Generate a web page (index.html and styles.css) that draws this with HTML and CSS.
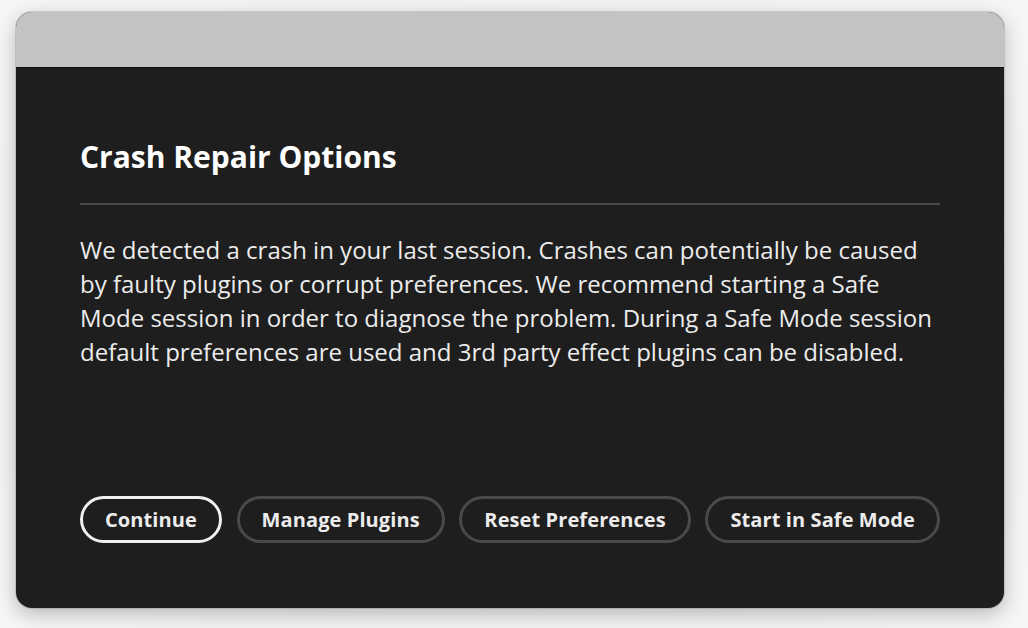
FILE: index.html
```html
<!DOCTYPE html>
<html>
<head>
<meta charset="utf-8">
<link rel="stylesheet" href="styles.css">
</head>
<body>
<div class="window">
  <div class="titlebar"></div>
  <div class="content">
    <h1 class="title">Crash Repair Options</h1>
    <div class="rule"></div>
    <p class="message">We detected a crash in your last session. Crashes can potentially be caused by faulty plugins or corrupt preferences. We recommend starting a Safe Mode session in order to diagnose the problem. During a Safe Mode session default preferences are used and 3rd party effect plugins can be disabled.</p>
    <div class="buttons">
      <button class="btn primary">Continue</button>
      <button class="btn">Manage Plugins</button>
      <button class="btn">Reset Preferences</button>
      <button class="btn">Start in Safe Mode</button>
    </div>
  </div>
</div>
</body>
</html>
```
FILE: styles.css
```css
html, body {
  margin: 0;
  padding: 0;
}
body {
  width: 1028px;
  height: 628px;
  background: radial-gradient(ellipse at center, #d8d8d8 0%, #f3f3f3 70%, #f6f6f6 100%);
  font-family: "Open Sans", "Lato", sans-serif;
  overflow: hidden;
}
.window {
  margin: 12px 0 0 16px;
  width: 988px;
  height: 596px;
  border-radius: 16px;
  overflow: hidden;
  background: #1e1e1e;
  box-shadow: 0 0 0 1px rgba(0,0,0,0.12), 0 6px 20px rgba(0,0,0,0.25);
  display: flex;
  flex-direction: column;
}
.titlebar {
  height: 55px;
  background: #c4c2c2;
  border-bottom: 1px solid #0e0e0e;
  flex: none;
}
.content {
  flex: 1;
  padding: 0 64px;
  display: flex;
  flex-direction: column;
}
.title {
  margin: 70px 0 0;
  color: #ffffff;
  font-size: 30px;
  font-weight: 700;
  line-height: 38px;
  letter-spacing: 0;
}
.rule {
  margin-top: 27px;
  height: 2px;
  background: #4a4a4a;
}
.message {
  margin: 28px 0 0;
  color: #ececec;
  font-size: 24px;
  line-height: 34px;
  letter-spacing: 0;
}
.buttons {
  margin-top: auto;
  margin-bottom: 65px;
  display: flex;
  justify-content: space-between;
}
.btn {
  height: 47px;
  padding: 0 22px;
  border-radius: 24px;
  border: 3px solid #4a4a4a;
  background: transparent;
  color: #ececec;
  font-family: "Open Sans", "Lato", sans-serif;
  font-size: 20px;
  font-weight: 700;
  letter-spacing: 0.1px;
}
.btn.primary {
  border-color: #f0f0f0;
}
```
